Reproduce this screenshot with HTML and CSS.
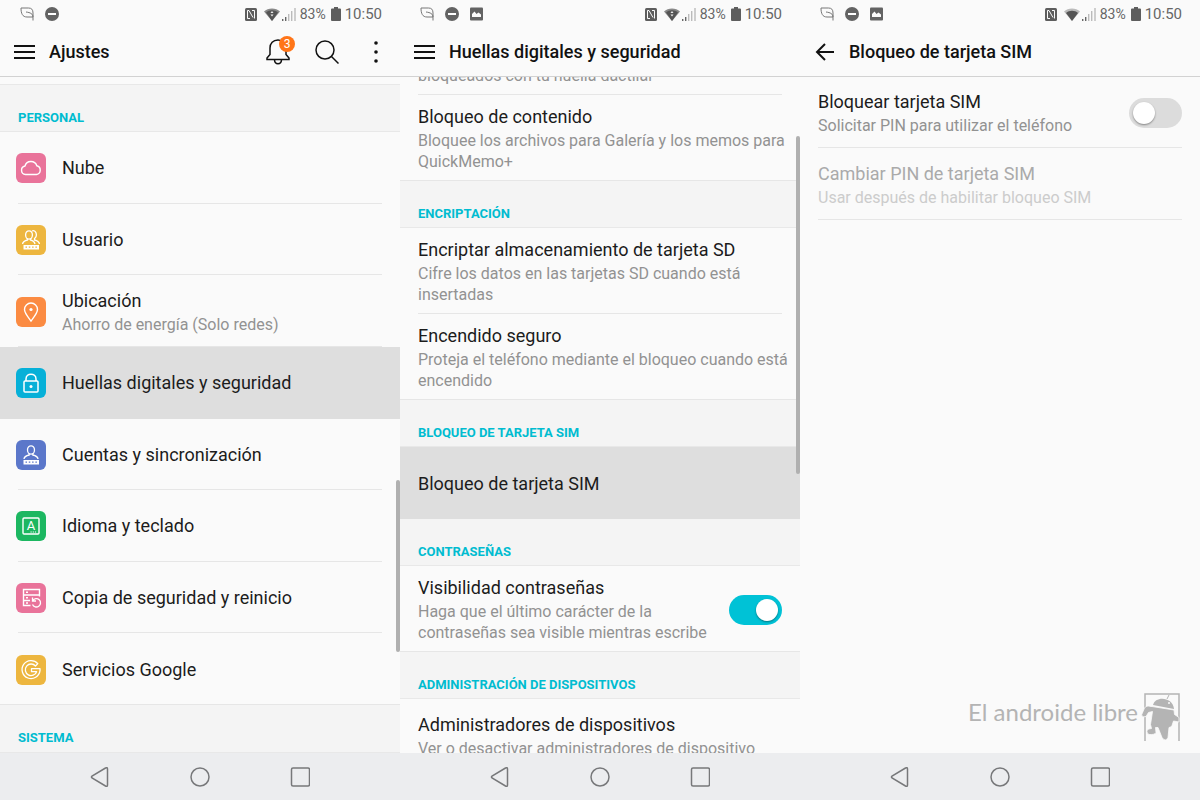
FILE: index.html
```html
<!DOCTYPE html>
<html lang="es">
<head>
    <meta charset="UTF-8">
    <meta name="viewport" content="width=device-width, initial-scale=1.0">
    <title>Ajustes - Bloqueo de tarjeta SIM</title>
    <link rel="stylesheet" href="styles.css">
</head>
<body>
    <!-- shared icons -->
    <svg class="sprite" xmlns="http://www.w3.org/2000/svg" aria-hidden="true">
        <symbol id="leaf" viewBox="0 0 14 14">
            <path d="M1 1h7.500c3 0 4.500 1.500 4.500 5v7.500M1 1c0 5.500 1.500 9 6 9h6M13 10c0-3-2.500-4.500-7-5" fill="none" stroke="#777" stroke-width="1"/>
        </symbol>
        <symbol id="minus" viewBox="0 0 14 14">
            <circle cx="7" cy="7" r="7" fill="#636363"/>
            <path d="M3 7h8" stroke="#fff" stroke-width="2"/>
        </symbol>
        <symbol id="photo" viewBox="0 0 14 14">
            <rect y=".5" width="13" height="13" rx="1" fill="#636363"/>
            <path d="M2 10V7l2.500-2.500L6.500 7l2-1.500L11 7.500V10z" fill="#fafafa"/>
        </symbol>
        <symbol id="nfc" viewBox="0 0 12 13">
            <rect width="12" height="13" rx="1.500" fill="#5d5d5d"/>
            <path d="M5 10.500H2.500v-8H4l4 7M7 2.500h2.500v8" fill="none" stroke="#fafafa" stroke-width="1"/>
        </symbol>
        <symbol id="wifi" viewBox="0 0 16 13">
            <path d="M0 3.500C4-.5 12-.5 16 3.500L8 13z" fill="#bbb"/>
            <path d="M2 5c3-3 9-3 12 0l-6 8z" fill="#555"/>
        </symbol>
        <symbol id="wifi-data" viewBox="0 0 16 13">
            <path d="M0 3.500C4-.5 12-.5 16 3.500L8 13z" fill="#888"/>
            <path d="M2 4.500c3-3 9-3 12 0L8 13z" fill="#555"/>
            <path d="M8 3l1.500 2h-3zM8 8.500L6.500 6.500h3z" fill="#eee"/>
        </symbol>
        <symbol id="signal" viewBox="0 0 14 13">
            <path d="M.7 11v2M3.700 9v4" stroke="#666" stroke-width="1.400"/>
            <path d="M6.700 6v7M9.700 3v10M13 0v13" stroke="#bbb" stroke-width="1.400"/>
        </symbol>
        <symbol id="battery" viewBox="0 0 10 14">
            <path d="M3 0h4v1.500h2q1 0 1 1V13q0 1-1 1H1q-1 0-1-1V2.500q0-1 1-1h2z" fill="#5d5d5d"/>
        </symbol>
        <symbol id="menu" viewBox="0 0 21 16">
            <path d="M0 2h21M0 8h21M0 14h21" stroke="#111" stroke-width="2"/>
        </symbol>
        <symbol id="back" viewBox="0 0 21 18">
            <path d="M11 1L3 9l8 8M3 9h17" fill="none" stroke="#111" stroke-width="2"/>
        </symbol>
        <symbol id="nav-back" viewBox="0 0 20 20">
            <path d="M2 9q-1 1 0 2l13.500 8q2 1 2-1V2q0-2-2-1z" fill="none" stroke="#77787a" stroke-width="1.500"/>
        </symbol>
        <symbol id="nav-home" viewBox="0 0 20 20">
            <circle cx="10" cy="10" r="9" fill="none" stroke="#77787a" stroke-width="1.500"/>
        </symbol>
        <symbol id="nav-recent" viewBox="0 0 20 20">
            <rect x="1.500" y="1" width="18" height="18" rx="1.500" fill="none" stroke="#77787a" stroke-width="1.500"/>
        </symbol>
    </svg>

    <main class="phones">
        <!-- Ajustes -->
        <section class="phone">
            <div class="status">
                <svg class="s14"><use href="#leaf"/></svg>
                <svg class="s14"><use href="#minus"/></svg>
                <div class="status-right">
                    <svg class="nfc"><use href="#nfc"/></svg>
                    <svg class="wifi"><use href="#wifi-data"/></svg>
                    <svg class="signal"><use href="#signal"/></svg>
                    <span class="percent">83%</span>
                    <svg class="battery"><use href="#battery"/></svg>
                    <span class="time">10:50</span>
                </div>
            </div>
            <header class="bar">
                <button class="icon-btn" aria-label="Menú"><svg class="menu"><use href="#menu"/></svg></button>
                <h1>Ajustes</h1>
                <div class="actions">
                    <button class="icon-btn bell" aria-label="Notificaciones">
                        <svg width="24" height="26" viewBox="0 0 24 26" fill="none" stroke="#111" stroke-width="1.500">
                            <path d="M1 20.500v-1.500l3-3.500V9c0-4.500 3-8 8-8s8 3.500 8 8v6.500l3 3.500v1.500zM8.500 21c.3 5 6.700 5 7 0"/>
                        </svg>
                        <span class="badge">3</span>
                    </button>
                    <button class="icon-btn" aria-label="Buscar">
                        <svg width="24" height="24" viewBox="0 0 24 24" fill="none" stroke="#111" stroke-width="1.500">
                            <circle cx="10" cy="10" r="9"/><path d="M16.500 16.500l7 7"/>
                        </svg>
                    </button>
                    <button class="icon-btn" aria-label="Más opciones">
                        <svg width="4" height="22" viewBox="0 0 4 22" fill="#111">
                            <circle cx="2" cy="2" r="1.800"/><circle cx="2" cy="11" r="1.800"/><circle cx="2" cy="20" r="1.800"/>
                        </svg>
                    </button>
                </div>
            </header>
            <div class="content content-main">
                <h2>PERSONAL</h2>
                <ul class="list list-main">
                    <li><a class="row" href="#">
                        <svg class="tile" viewBox="0 0 30 30"><rect width="30" height="30" rx="6" fill="#e9739a"/>
                            <path d="M9.500 21.500a4.300 4.300 0 0 1-.5-8.500 6.200 6.200 0 0 1 11.800-.3 4.500 4.500 0 0 1-.3 8.800z" fill="none" stroke="#fff" stroke-width="1.400"/></svg>
                        <span class="name">Nube</span></a></li>
                    <li><a class="row" href="#">
                        <svg class="tile" viewBox="0 0 30 30"><rect width="30" height="30" rx="6" fill="#edb63f"/>
                            <g fill="none" stroke="#fff" stroke-width="1.300"><ellipse cx="13" cy="10" rx="3.400" ry="4.200"/><path d="M11.500 13.500v1.500c-3 .7-4.500 1.500-5 4M14.500 13.500v1.500c3 .7 4 1.500 4.500 4M16 6c4-2 6 5 2.500 7.500V15c3 .7 4.500 1.500 5 4"/></g>
                            <rect x="7.500" y="20" width="15.500" height="4.500" fill="#fff"/>
                            <path d="M9.500 22.200h12" stroke="#edb63f" stroke-width="1.300" stroke-dasharray="1.500 1.800"/></svg>
                        <span class="name">Usuario</span></a></li>
                    <li><a class="row" href="#">
                        <svg class="tile" viewBox="0 0 30 30"><rect width="30" height="30" rx="6" fill="#fb8b42"/>
                            <path d="M15 24c-3-4-6.500-8-6.500-11.500a6.500 6.500 0 0 1 13 0C21.500 16 18 20 15 24z" fill="none" stroke="#fff" stroke-width="1.400"/><circle cx="15" cy="12.500" r="1.600" fill="#fff"/></svg>
                        <span class="name">Ubicación <small class="desc">Ahorro de energía (Solo redes)</small></span></a></li>
                    <li class="selected"><a class="row" href="#">
                        <svg class="tile" viewBox="0 0 30 30"><rect width="30" height="30" rx="6" fill="#06b0d8"/>
                            <g fill="none" stroke="#fff" stroke-width="1.500"><rect x="8" y="13" width="14" height="11" rx="1"/><path d="M10 13v-2c0-6.500 10-6.500 10 0v2"/></g><circle cx="15" cy="18.500" r="1.500" fill="#fff"/></svg>
                        <span class="name">Huellas digitales y seguridad</span></a></li>
                    <li><a class="row" href="#">
                        <svg class="tile" viewBox="0 0 30 30"><rect width="30" height="30" rx="6" fill="#5b77ca"/>
                            <g fill="none" stroke="#fff" stroke-width="1.300"><ellipse cx="15" cy="10" rx="3.500" ry="4.200"/><path d="M13.200 13.500V15c-3 .7-5 1.500-5.200 4M16.800 13.500V15c3 .7 5 1.500 5.200 4"/></g>
                            <rect x="7.500" y="20" width="15.500" height="4.500" fill="#fff"/>
                            <path d="M9.500 22.200h12" stroke="#5b77ca" stroke-width="1.300" stroke-dasharray="1.500 1.800"/></svg>
                        <span class="name">Cuentas y sincronización</span></a></li>
                    <li><a class="row" href="#">
                        <svg class="tile" viewBox="0 0 30 30"><rect width="30" height="30" rx="6" fill="#1cb761"/>
                            <rect x="7" y="7" width="16" height="16" rx="1" fill="none" stroke="#fff" stroke-width="1.400"/>
                            <text x="15" y="19" class="tile-letter">A</text>
                            <path d="M14.500 21h6" stroke="#fff" stroke-width="1.200" stroke-dasharray="1.200 1"/></svg>
                        <span class="name">Idioma y teclado</span></a></li>
                    <li><a class="row" href="#">
                        <svg class="tile" viewBox="0 0 30 30"><rect width="30" height="30" rx="6" fill="#e9739a"/>
                            <path d="M23.500 13.500v-7h-16v16h7M7.500 12h16M7.500 17.500h6.500M10 9.300h2M10 14.800h2M10 20h2" fill="none" stroke="#fff" stroke-width="1.400"/>
                            <path d="M16.500 14.500v3.500h3.500M16.800 17.500a4.200 4.200 0 1 1-.3 4" fill="none" stroke="#fff" stroke-width="1.300"/></svg>
                        <span class="name">Copia de seguridad y reinicio</span></a></li>
                    <li><a class="row" href="#">
                        <svg class="tile" viewBox="0 0 30 30"><rect width="30" height="30" rx="6" fill="#edb63f"/>
                            <path d="M21.800 8.600A9 9 0 1 0 24 15.700v-2h-8.500v3h5.100a5.800 5.800 0 1 1-1.100-5.700z" fill="none" stroke="#fff" stroke-width="1.300" stroke-linejoin="round"/></svg>
                        <span class="name">Servicios Google</span></a></li>
                </ul>
                <h2>SISTEMA</h2>
                <div class="thumb thumb-main"></div>
            </div>
            <nav class="nav">
                <button aria-label="Atrás"><svg><use href="#nav-back"/></svg></button>
                <button aria-label="Inicio"><svg><use href="#nav-home"/></svg></button>
                <button aria-label="Recientes"><svg><use href="#nav-recent"/></svg></button>
            </nav>
        </section>

        <!-- Huellas digitales y seguridad -->
        <section class="phone">
            <div class="status">
                <svg class="s14"><use href="#leaf"/></svg>
                <svg class="s14"><use href="#minus"/></svg>
                <svg class="s14"><use href="#photo"/></svg>
                <div class="status-right">
                    <svg class="nfc"><use href="#nfc"/></svg>
                    <svg class="wifi"><use href="#wifi-data"/></svg>
                    <svg class="signal"><use href="#signal"/></svg>
                    <span class="percent">83%</span>
                    <svg class="battery"><use href="#battery"/></svg>
                    <span class="time">10:50</span>
                </div>
            </div>
            <header class="bar">
                <button class="icon-btn" aria-label="Menú"><svg class="menu"><use href="#menu"/></svg></button>
                <h1>Huellas digitales y seguridad</h1>
            </header>
            <div class="content">
                <ul class="list list-scrolled">
                    <li><a class="item item-cut" href="#"><span class="desc">bloqueados con tu huella dactilar</span></a></li>
                    <li><a class="item" href="#"><span class="name">Bloqueo de contenido
                        <small class="desc">Bloquee los archivos para Galería y los memos para QuickMemo+</small></span></a></li>
                </ul>
                <h2>ENCRIPTACIÓN</h2>
                <ul class="list">
                    <li><a class="item" href="#"><span class="name">Encriptar almacenamiento de tarjeta SD
                        <small class="desc">Cifre los datos en las tarjetas SD cuando está insertadas</small></span></a></li>
                    <li><a class="item" href="#"><span class="name">Encendido seguro
                        <small class="desc">Proteja el teléfono mediante el bloqueo cuando está encendido</small></span></a></li>
                </ul>
                <h2>BLOQUEO DE TARJETA SIM</h2>
                <ul class="list">
                    <li class="selected"><a class="item" href="#"><span class="name">Bloqueo de tarjeta SIM</span></a></li>
                </ul>
                <h2>CONTRASEÑAS</h2>
                <ul class="list">
                    <li><label class="item"><span class="name">Visibilidad contraseñas
                        <small class="desc">Haga que el último carácter de la contraseñas sea visible mientras escribe</small></span>
                        <input class="switch" type="checkbox" checked></label></li>
                </ul>
                <h2>ADMINISTRACIÓN DE DISPOSITIVOS</h2>
                <ul class="list">
                    <li><a class="item" href="#"><span class="name">Administradores de dispositivos
                        <small class="desc">Ver o desactivar administradores de dispositivo</small></span></a></li>
                </ul>
                <div class="thumb thumb-security"></div>
            </div>
            <nav class="nav">
                <button aria-label="Atrás"><svg><use href="#nav-back"/></svg></button>
                <button aria-label="Inicio"><svg><use href="#nav-home"/></svg></button>
                <button aria-label="Recientes"><svg><use href="#nav-recent"/></svg></button>
            </nav>
        </section>

        <!-- Bloqueo de tarjeta SIM -->
        <section class="phone">
            <div class="status">
                <svg class="s14"><use href="#leaf"/></svg>
                <svg class="s14"><use href="#minus"/></svg>
                <svg class="s14"><use href="#photo"/></svg>
                <div class="status-right">
                    <svg class="nfc"><use href="#nfc"/></svg>
                    <svg class="wifi"><use href="#wifi"/></svg>
                    <svg class="signal"><use href="#signal"/></svg>
                    <span class="percent">83%</span>
                    <svg class="battery"><use href="#battery"/></svg>
                    <span class="time">10:50</span>
                </div>
            </div>
            <header class="bar">
                <button class="icon-btn" aria-label="Volver"><svg class="back"><use href="#back"/></svg></button>
                <h1>Bloqueo de tarjeta SIM</h1>
            </header>
            <div class="content">
                <ul class="list list-sim">
                    <li><label class="item"><span class="name">Bloquear tarjeta SIM
                        <small class="desc">Solicitar PIN para utilizar el teléfono</small></span>
                        <input class="switch" type="checkbox"></label></li>
                    <li class="disabled"><a class="item" aria-disabled="true"><span class="name">Cambiar PIN de tarjeta SIM
                        <small class="desc">Usar después de habilitar bloqueo SIM</small></span></a></li>
                </ul>
                <div class="brand">
                    <span>El androide libre</span>
                    <svg width="42" height="50" viewBox="0 0 42 50">
                        <path d="M5 49V2h34v47" fill="none" stroke="#b4b4b4" stroke-width="1.500"/>
                        <path d="M13 13C15 3.500 33 4.500 34 17z" fill="#b4b4b4"/>
                        <!-- arms and body -->
                        <path d="M12 14.500L34 18l.5 4.500 4.500 3v4.500l-5.500-1-1.500 4.500q-1 2-3 2l-1 10q-2.500 5-6 0l-4-10h-2.500l.5 5q-1 2.500-7 2-4-2.500-.5-5.500l3-.5-1-4 2-13-4 1-2.500 4q-3 1.500-4.500-1.500l3-7q2-3 6.500-1.500z" fill="#b4b4b4" stroke="#fafafa" stroke-width=".8" stroke-linejoin="round"/>
                        <path d="M27 7l2-4" stroke="#b4b4b4"/>
                        <circle cx="29" cy="11" r="1" fill="#fafafa"/>
                    </svg>
                </div>
            </div>
            <nav class="nav">
                <button aria-label="Atrás"><svg><use href="#nav-back"/></svg></button>
                <button aria-label="Inicio"><svg><use href="#nav-home"/></svg></button>
                <button aria-label="Recientes"><svg><use href="#nav-recent"/></svg></button>
            </nav>
        </section>
    </main>
</body>
</html>
```
FILE: styles.css
```css
* {
    box-sizing: border-box;
}
body {
    margin: 0;
    background: #fafafa;
    color: #1c1c1c;
    font-family: Roboto, sans-serif;
}
h1, h2, ul {
    margin: 0;
    padding: 0;
}
button {
    border: 0;
    padding: 0;
    background: none;
    font-family: inherit;
}
svg {
    display: block;
    flex: none;
}
.sprite {
    position: absolute;
    width: 0;
    height: 0;
}
.phones {
    display: flex;
    height: 100vh;
}
.phone {
    flex: 1;
    min-width: 0;
    display: flex;
    flex-direction: column;
}

/* status bar */
.status {
    display: flex;
    align-items: center;
    gap: 11px;
    height: 28px;
    padding: 0 18px 0 20px;
    color: #666;
}
.status-right {
    display: flex;
    align-items: center;
    margin-left: auto;
}
.s14 {
    width: 14px;
    height: 14px;
}
.nfc {
    width: 12px;
    height: 13px;
    margin-right: 7px;
}
.wifi {
    width: 16px;
    height: 13px;
    margin-right: 2px;
}
.signal {
    width: 14px;
    height: 13px;
    margin-right: 4px;
}
.percent {
    font-size: 14px;
    margin-right: 5px;
}
.battery {
    width: 10px;
    height: 14px;
    margin-right: 4px;
}
.time {
    font-size: 15px;
}

/* title bar */
.bar {
    position: relative;
    z-index: 1;
    display: flex;
    align-items: center;
    gap: 14px;
    height: 48px;
    padding: 0 22px 0 14px;
    background: #fafafa;
    box-shadow: 0 1px 0 #d2d2d2;
}
.bar h1 {
    font-size: 18px;
    font-weight: 500;
    line-height: 24px;
    color: #111;
}
.menu {
    width: 21px;
    height: 16px;
}
.back {
    width: 21px;
    height: 18px;
}
.actions {
    display: flex;
    align-items: center;
    gap: 25px;
    margin-left: auto;
}
.actions .icon-btn:last-child {
    margin-left: 10px;
}
.bell {
    position: relative;
}
.badge {
    position: absolute;
    top: -3px;
    right: -5px;
    width: 16px;
    border-radius: 50%;
    background: #ff7518;
    color: #fff;
    font-size: 12px;
    line-height: 16px;
    text-align: center;
}

/* lists */
.content {
    position: relative;
    flex: 1;
    min-height: 0;
    overflow: hidden;
    display: flex;
    flex-direction: column;
}
h2 {
    flex: none;
    height: 47px;
    padding: 25px 18px 0;
    border-bottom: 1px solid #e8e8e8;
    background: #f4f4f4;
    color: #00bcd0;
    font-size: 13px;
    font-weight: 700;
    line-height: 16px;
}
.content-main {
    padding-top: 8px;
}
.content-main h2 {
    height: 48px;
}
.content-main h2:first-child {
    border-top: 1px solid #e8e8e8;
}
.list {
    flex: none;
    list-style: none;
}
.list li::after {
    content: "";
    display: block;
    height: 1px;
    margin: 0 18px;
    background: #e6e6e6;
}
.list li:last-child::after {
    margin: 0;
}
.list-sim li:last-child::after {
    margin: 0 18px;
}
.list .selected, .list .selected::after {
    background: #dedede;
}
.list-main {
    flex: 1;
    display: flex;
    flex-direction: column;
}
.list-main li {
    flex: 1;
    display: flex;
    flex-direction: column;
}
.list-scrolled {
    margin-top: -11px;
}
.row, .item {
    display: flex;
    align-items: center;
    color: inherit;
    text-decoration: none;
}
.row {
    flex: 1;
    gap: 16px;
    padding: 2px 18px 0 16px;
}
.item {
    justify-content: space-between;
    gap: 12px;
    min-height: 71px;
    padding: 10px 12px 8px 18px;
}
.item-cut {
    min-height: 0;
    padding-top: 0;
}
.name {
    font-size: 18px;
    line-height: 24px;
}
.desc {
    display: block;
    color: #929292;
    font-size: 16px;
    line-height: 21px;
}
.name .desc {
    margin-top: 1px;
}
.disabled .name {
    color: #aaa;
}
.disabled .desc {
    color: #ccc;
}
.tile {
    width: 30px;
    height: 30px;
}
.tile-letter {
    fill: #fff;
    font-size: 13px;
    text-anchor: middle;
}

/* on/off switch */
.switch {
    appearance: none;
    flex: none;
    display: flex;
    align-items: center;
    width: 53px;
    height: 30px;
    margin: 0 6px 0 0;
    padding: 0 4px;
    border-radius: 15px;
    background: #dcdcdc;
}
.switch::before {
    content: "";
    width: 22px;
    height: 22px;
    border-radius: 50%;
    background: #fff;
    box-shadow: 0 1px 2px rgba(0, 0, 0, .4);
}
.switch:checked {
    justify-content: flex-end;
    background: #00c2d6;
}

/* scroll thumbs */
.thumb {
    position: absolute;
    right: 0;
    width: 4px;
    border-radius: 2px;
    background: #b0b0b0;
}
.thumb-main {
    top: 404px;
    height: 172px;
}
.thumb-security {
    top: 60px;
    height: 338px;
}

.brand {
    display: flex;
    justify-content: flex-end;
    gap: 2px;
    margin-top: auto;
    padding: 0 18px 11px;
    color: #b4b4b4;
    font-family: Lato, sans-serif;
    font-size: 24px;
    line-height: 40px;
}

/* navigation buttons */
.nav {
    display: flex;
    justify-content: center;
    height: 47px;
    background: #ecedef;
}
.nav button {
    display: flex;
    align-items: center;
    justify-content: center;
    width: 25%;
}
.nav svg {
    width: 20px;
    height: 20px;
}
```
